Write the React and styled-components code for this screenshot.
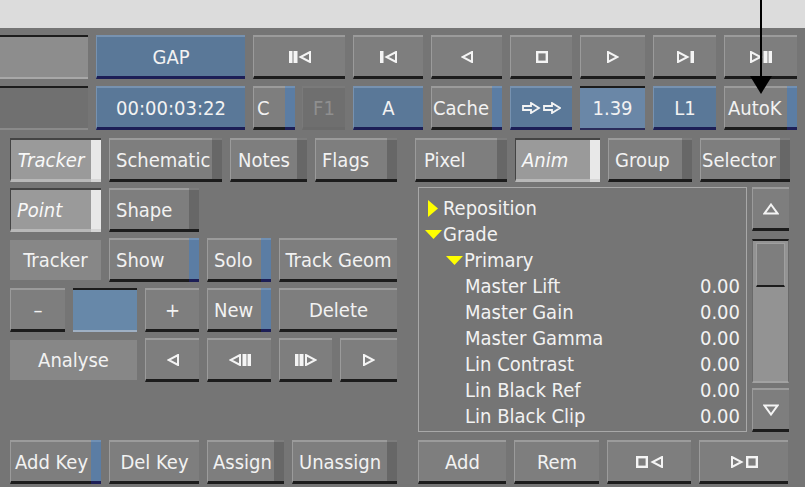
import React from "react";
import styled, { createGlobalStyle } from "styled-components";

const GlobalStyle = createGlobalStyle`
  html, body {
    margin: 0;
    padding: 0;
    background: #757575;
  }
  body {
    font-family: "DejaVu Sans Condensed", "DejaVu Sans", sans-serif;
    font-stretch: condensed;
  }
`;

const TONES = {
  gray: { face: "#7e7e7e", top: "#9b9b9b", bottom: "#1c1c1c", text: "#f2f2f2" },
  blue: { face: "#5a7898", top: "#7792b0", bottom: "#1c1e56", text: "#f2f2f2" },
  light: { face: "#9a9a9a", top: "#444444", bottom: "#b8b8b8", text: "#f8f8f8" },
  dim: { face: "#6f6f6f", top: "#7a7a7a", bottom: "#6b6b6b", text: "#8f8f8f" },
};

const STRIPS = {
  dark: { face: "#676767", top: "#7d7d7d", bottom: "#1c1c1c" },
  blue: { face: "#5b7da4", top: "#7090b4", bottom: "#1c1e56" },
  white: { face: "#e8e8e8", top: "#444444", bottom: "#d6d6d6" },
};

const Screen = styled.div`
  position: relative;
  width: 805px;
  height: 487px;
  overflow: hidden;
  background: #757575;
  display: flex;
  flex-direction: column;
`;

const TopStrip = styled.div`
  height: 28px;
  flex: none;
  background: #dcdcdc;
`;

const Transport = styled.div`
  display: grid;
  grid-template-columns: 88px 149px 92px 70px 71px 62px 65px 63px 73px;
  grid-auto-rows: 44px;
  column-gap: 8px;
  row-gap: 7px;
  padding-top: 7px;
`;

const Split = styled.div`
  display: flex;
  gap: 7px;
`;

const Main = styled.div`
  display: flex;
  gap: 18px;
  padding: 8px 0 0 10px;
  height: 346px;
`;

const LeftCol = styled.div`
  width: 387px;
  display: flex;
  flex-direction: column;
  gap: 6px;
`;

const RightCol = styled.div`
  width: 374px;
  display: flex;
  flex-direction: column;
`;

const Row = styled.div`
  display: flex;
  gap: 8px;
  margin-top: ${(p) => (p.$push ? "auto" : "0")};
  margin-left: ${(p) => p.$inset || 0}px;
`;

const BtnWrap = styled.div`
  display: flex;
  height: 44px;
  flex: none;
  width: ${(p) => (p.$w ? `${p.$w}px` : "auto")};
  box-sizing: border-box;
`;

const Face = styled.div`
  flex: 1;
  min-width: 0;
  display: flex;
  align-items: center;
  justify-content: ${(p) => (p.$left ? "flex-start" : "center")};
  padding-left: ${(p) => (p.$left ? `${p.$pad}px` : "0")};
  background: ${(p) => TONES[p.$tone].face};
  border-top: 2px solid ${(p) => TONES[p.$tone].top};
  border-bottom: 3px solid ${(p) => TONES[p.$tone].bottom};
  border-left: 1px solid ${(p) => TONES[p.$tone].top};
  color: ${(p) => TONES[p.$tone].text};
  font-size: 20px;
  font-style: ${(p) => (p.$italic ? "italic" : "normal")};
  white-space: nowrap;
  overflow: hidden;
`;

const Strip = styled.div`
  width: 10px;
  flex: none;
  background: ${(p) => STRIPS[p.$kind].face};
  border-top: 2px solid ${(p) => STRIPS[p.$kind].top};
  border-bottom: 3px solid ${(p) => STRIPS[p.$kind].bottom};
`;

const Field = styled.div`
  height: 44px;
  box-sizing: border-box;
  width: ${(p) => (p.$w ? `${p.$w}px` : "auto")};
  flex: none;
  display: flex;
  align-items: center;
  justify-content: center;
  background: ${(p) => p.$bg};
  border-top: 2px solid #1c1c1c;
  border-bottom: 2px solid ${(p) => p.$edge};
  color: #f2f2f2;
  font-size: 20px;
`;

const Label = styled.div`
  width: ${(p) => p.$w}px;
  height: 40px;
  margin: 2px 0;
  flex: none;
  display: flex;
  align-items: center;
  justify-content: center;
  background: #878787;
  color: #f2f2f2;
  font-size: 20px;
`;

const ListArea = styled.div`
  display: flex;
  margin: 5px 0 0 3px;
  height: 245px;
`;

const ListBox = styled.div`
  width: 329px;
  box-sizing: border-box;
  border: 1px solid #a8a8a8;
  padding: 7px 6px 0 6px;
  overflow: hidden;
`;

const ListRow = styled.div`
  display: flex;
  align-items: center;
  height: 26px;
  padding-left: ${(p) => p.$indent}px;
  color: #f2f2f2;
  font-size: 20px;
  white-space: nowrap;
`;

const Caret = styled.span`
  width: 17px;
  margin-right: 1px;
  flex: none;
  display: flex;
  justify-content: center;
  align-items: center;
`;

const Value = styled.span`
  margin-left: auto;
`;

const ScrollCol = styled.div`
  width: 37px;
  margin-left: 5px;
  display: flex;
  flex-direction: column;
`;

const Track = styled.div`
  height: 145px;
  margin: 8px 0 5px;
  box-sizing: border-box;
  background: #939393;
  border-top: 2px solid #1c1c1c;
  border-left: 1px solid #6a6a6a;
  border-right: 1px solid #6a6a6a;
  border-bottom: 2px solid #a2a2a2;
  padding: 2px 3px 0;
`;

const Thumb = styled.div`
  height: 44px;
  box-sizing: border-box;
  background: #7e7e7e;
  border: 1px solid #a0a0a0;
  border-bottom: 2px solid #1c1c1c;
`;

const Marker = styled.svg`
  position: absolute;
  left: 748px;
  top: 0;
`;

const PARTS = {
  I: { w: 3, draw: (x) => <rect key={x} x={x} y={0} width={3} height={12} /> },
  L: {
    w: 12,
    draw: (x) => (
      <polygon key={x} points={`${x + 11},1 ${x + 11},11 ${x + 1.5},6`} fill="none" strokeWidth={2} />
    ),
  },
  R: {
    w: 12,
    draw: (x) => (
      <polygon key={x} points={`${x + 1},1 ${x + 1},11 ${x + 10.5},6`} fill="none" strokeWidth={2} />
    ),
  },
  S: {
    w: 12,
    draw: (x) => <rect key={x} x={x + 1.2} y={1.2} width={9.6} height={9.6} fill="none" strokeWidth={2.4} />,
  },
  A: {
    w: 18,
    draw: (x) => (
      <polygon
        key={x}
        points={`${x + 1},4 ${x + 9},4 ${x + 9},1 ${x + 17},6 ${x + 9},11 ${x + 9},8 ${x + 1},8`}
        fill="none"
        strokeWidth={1.8}
      />
    ),
  },
};

const Glyph = ({ seq, gap = 2 }) => {
  const items = [];
  let x = 0;
  seq.split("").forEach((k, i) => {
    if (i > 0) x += gap;
    items.push(PARTS[k].draw(x));
    x += PARTS[k].w;
  });
  return (
    <svg width={x} height={12} viewBox={`0 0 ${x} 12`} fill="#f4f4f4" stroke="#f4f4f4">
      {items}
    </svg>
  );
};

const ScrollArrow = ({ up }) => (
  <svg width="16" height="12" viewBox="0 0 16 12" fill="none" stroke="#f4f4f4" strokeWidth="2">
    {up ? <polygon points="8,1.5 14.5,10.5 1.5,10.5" /> : <polygon points="1.5,1.5 14.5,1.5 8,10.5" />}
  </svg>
);

const Tri = ({ dir }) => (
  <svg width="17" height="17" viewBox="0 0 17 17" fill="#ffff00">
    {dir === "right" ? <polygon points="3,0 13,8.5 3,17" /> : <polygon points="0,4 17,4 8.5,13" />}
  </svg>
);

const Btn = ({ w, tone = "gray", strip, italic, center, pad = 6, children }) => (
  <BtnWrap $w={w}>
    <Face $tone={tone} $left={!!strip && !center} $pad={pad} $italic={italic}>
      {children}
    </Face>
    {strip && <Strip $kind={strip} />}
  </BtnWrap>
);

const params = [
  ["Master Lift", "0.00"],
  ["Master Gain", "0.00"],
  ["Master Gamma", "0.00"],
  ["Lin Contrast", "0.00"],
  ["Lin Black Ref", "0.00"],
  ["Lin Black Clip", "0.00"],
];

export default function App() {
  return (
    <>
      <GlobalStyle />
      <Screen>
        <TopStrip />
        <Transport>
          <Field $bg="#8d8d8d" $edge="#a8a8a8" />
          <Btn tone="blue">GAP</Btn>
          <Btn><Glyph seq="IIL" /></Btn>
          <Btn><Glyph seq="IL" /></Btn>
          <Btn><Glyph seq="L" /></Btn>
          <Btn><Glyph seq="S" /></Btn>
          <Btn><Glyph seq="R" /></Btn>
          <Btn><Glyph seq="RI" /></Btn>
          <Btn><Glyph seq="RII" /></Btn>

          <Field $bg="#707070" $edge="#8a8a8a" />
          <Btn tone="blue">00:00:03:22</Btn>
          <Split>
            <Btn w={42} strip="blue" pad={3}>C</Btn>
            <Btn w={43} tone="dim">F1</Btn>
          </Split>
          <Btn tone="blue">A</Btn>
          <Btn strip="blue" pad={1}>Cache</Btn>
          <Btn tone="blue"><Glyph seq="AA" gap={3} /></Btn>
          <Field $bg="#6a87a7" $edge="#2a2c5a">1.39</Field>
          <Btn tone="blue">L1</Btn>
          <Btn strip="blue" pad={3}>AutoK</Btn>
        </Transport>

        <Main>
          <LeftCol>
            <Row>
              <Btn w={91} tone="light" strip="white" italic center>Tracker</Btn>
              <Btn w={113} strip="dark">Schematic</Btn>
              <Btn w={77} strip="dark" center>Notes</Btn>
              <Btn w={82} strip="dark">Flags</Btn>
            </Row>
            <Row>
              <Btn w={91} tone="light" strip="white" italic>Point</Btn>
              <Btn w={90} strip="dark">Shape</Btn>
            </Row>
            <Row>
              <Label $w={91}>Tracker</Label>
              <Btn w={90} strip="blue">Show</Btn>
              <Btn w={64} strip="blue">Solo</Btn>
              <Btn w={118}>Track Geom</Btn>
            </Row>
            <Row>
              <Btn w={55}>–</Btn>
              <Field $w={64} $bg="#6788a9" $edge="#9fb0c4" />
              <Btn w={54}>+</Btn>
              <Btn w={64} strip="blue">New</Btn>
              <Btn w={118}>Delete</Btn>
            </Row>
            <Row>
              <Label $w={127}>Analyse</Label>
              <Btn w={54}><Glyph seq="L" /></Btn>
              <Btn w={64}><Glyph seq="LII" /></Btn>
              <Btn w={53}><Glyph seq="IIR" /></Btn>
              <Btn w={57}><Glyph seq="R" /></Btn>
            </Row>
            <Row $push>
              <Btn w={91} strip="blue" pad={4}>Add Key</Btn>
              <Btn w={90}>Del Key</Btn>
              <Btn w={77} strip="dark" pad={5}>Assign</Btn>
              <Btn w={105} strip="dark">Unassign</Btn>
            </Row>
          </LeftCol>

          <RightCol>
            <Row>
              <Btn w={92} strip="dark" pad={8}>Pixel</Btn>
              <Btn w={85} tone="light" strip="white" italic>Anim</Btn>
              <Btn w={84} strip="dark">Group</Btn>
              <Btn w={90} strip="dark" pad={1}>Selector</Btn>
            </Row>
            <ListArea>
              <ListBox>
                <ListRow $indent={0}>
                  <Caret><Tri dir="right" /></Caret>Reposition
                </ListRow>
                <ListRow $indent={0}>
                  <Caret><Tri dir="down" /></Caret>Grade
                </ListRow>
                <ListRow $indent={21}>
                  <Caret><Tri dir="down" /></Caret>Primary
                </ListRow>
                {params.map(([name, val]) => (
                  <ListRow key={name} $indent={40}>
                    {name}
                    <Value>{val}</Value>
                  </ListRow>
                ))}
              </ListBox>
              <ScrollCol>
                <Btn><ScrollArrow up /></Btn>
                <Track>
                  <Thumb />
                </Track>
                <Btn><ScrollArrow /></Btn>
              </ScrollCol>
            </ListArea>
            <Row $push $inset={3}>
              <Btn w={88}>Add</Btn>
              <Btn w={85}>Rem</Btn>
              <Btn w={84}><Glyph seq="SL" gap={3} /></Btn>
              <Btn w={89}><Glyph seq="RS" gap={3} /></Btn>
            </Row>
          </RightCol>
        </Main>

        <Marker width="26" height="96" viewBox="0 0 26 96">
          <rect x="12" y="0" width="2" height="80" fill="#000" />
          <polygon points="2,76 24,76 13,94" fill="#000" />
        </Marker>
      </Screen>
    </>
  );
}
